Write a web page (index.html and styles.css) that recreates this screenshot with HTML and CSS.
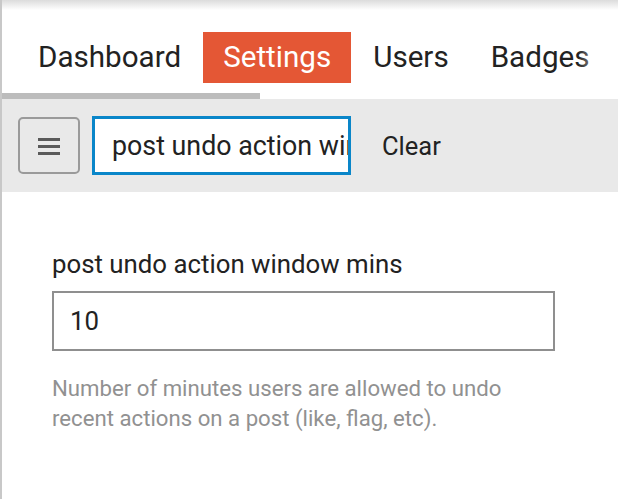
FILE: index.html
```html
<!DOCTYPE html>
<html>
<head>
<meta charset="utf-8">
<link rel="stylesheet" href="styles.css">
</head>
<body>
<div class="page">
  <div class="topshade"></div>
  <div class="navwrap">
    <nav class="nav">
      <a class="tab">Dashboard</a>
      <a class="tab active">Settings</a>
      <a class="tab">Users</a>
      <a class="tab">Badges</a>
    </nav>
    <div class="fade"></div>
  </div>
  <div class="scrollbar"></div>
  <div class="panel">
    <button class="menu-btn" aria-label="menu">
      <svg width="24" height="20" viewBox="0 0 24 20"><rect x="1" y="2" width="22" height="3" fill="#5a5a5a"/><rect x="1" y="9" width="22" height="3" fill="#5a5a5a"/><rect x="1" y="16" width="22" height="3" fill="#5a5a5a"/></svg>
    </button>
    <input class="search" type="text" value="post undo action window mins">
    <button class="clear">Clear</button>
  </div>
  <div class="content">
    <div class="label">post undo action window mins</div>
    <div class="field"><span>10</span></div>
    <div class="desc">Number of minutes users are allowed to undo recent actions on a post (like, flag, etc).</div>
  </div>
</div>
</body>
</html>
```

FILE: styles.css
```css
html, body {
  margin: 0;
  padding: 0;
  background: #fff;
}
body {
  font-family: Roboto, "Noto Sans", sans-serif;
  color: #222;
}
.page {
  border-left: 2px solid #c8c8c8;
  min-height: 499px;
  box-sizing: border-box;
  overflow: hidden;
}
.topshade {
  height: 10px;
  background: linear-gradient(#dcdcdc, #ffffff);
}
.navwrap {
  position: relative;
  margin-top: 22px;
  overflow: hidden;
}
.nav {
  display: flex;
  padding-left: 16px;
  white-space: nowrap;
}
.tab {
  display: block;
  font-size: 29.6px;
  height: 51px;
  line-height: 51px;
  padding: 0 20px;
  margin-right: 2px;
  color: #222;
  flex: none;
}
.tab.active {
  background: #e45735;
  color: #fff;
}
.fade {
  position: absolute;
  right: 0;
  top: 0;
  width: 40px;
  height: 100%;
  background: linear-gradient(to right, rgba(255,255,255,0), #fff 85%);
}
.scrollbar {
  margin-top: 10px;
  width: 258px;
  height: 6px;
  background: #bcbcbc;
}
.panel {
  display: flex;
  align-items: center;
  height: 93px;
  background: #e9e9e9;
  padding-left: 16px;
}
.menu-btn {
  width: 62px;
  height: 57px;
  box-sizing: border-box;
  border: 2px solid #9a9a9a;
  border-radius: 5px;
  background: #e9e9e9;
  display: flex;
  align-items: center;
  justify-content: center;
  padding: 0;
}
.search {
  margin: 0 0 0 12px;
  width: 259px;
  height: 59px;
  box-sizing: border-box;
  border: 3px solid #0a86c9;
  border-radius: 0;
  background: #fff;
  outline: none;
  padding: 0 0 0 17px;
  font-family: Roboto, "Noto Sans", sans-serif;
  font-size: 26.8px;
  color: #222;
}
.clear {
  margin-left: 21px;
  background: none;
  border: none;
  font-family: Roboto, "Noto Sans", sans-serif;
  font-size: 25.5px;
  color: #222;
  padding: 0 10px;
}
.content {
  padding: 56px 0 0 50px;
}
.label {
  font-size: 25.8px;
  line-height: 32px;
}
.field {
  margin-top: 11px;
  width: 503px;
  height: 60px;
  box-sizing: border-box;
  border: 2px solid #8f8f8f;
  padding-left: 16px;
  font-size: 25.8px;
  line-height: 56px;
}
.desc {
  margin-top: 22px;
  width: 480px;
  font-size: 22.2px;
  line-height: 30px;
  color: #919191;
}
```
